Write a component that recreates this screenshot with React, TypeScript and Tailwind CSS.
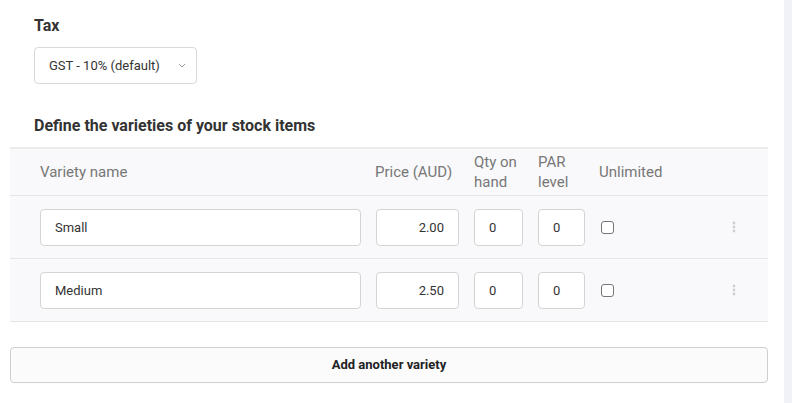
import React from 'react';

type Variety = { name: string; price: string; qty: string; par: string };

const varieties: Variety[] = [
  { name: 'Small', price: '2.00', qty: '0', par: '0' },
  { name: 'Medium', price: '2.50', qty: '0', par: '0' },
];

const inputCls =
  'h-[37px] rounded-[4px] border border-[#d4d4d4] bg-white px-[14px] text-[13px] text-[#333] outline-none';

function Kebab() {
  return (
    <svg width="4" height="12" viewBox="0 0 4 12" className="block">
      <circle cx="2" cy="2" r="1.4" fill="#cfcfcf" />
      <circle cx="2" cy="6" r="1.4" fill="#cfcfcf" />
      <circle cx="2" cy="10" r="1.4" fill="#cfcfcf" />
    </svg>
  );
}

function VarietyRow({ v }: { v: Variety }) {
  return (
    <div className="flex h-[63px] items-center border-b border-[#e6e6e6] pl-[30px] pr-[32px]">
      <input readOnly value={v.name} className={`${inputCls} w-[321px]`} />
      <input readOnly value={v.price} className={`${inputCls} ml-[15px] w-[83px] text-right`} />
      <input readOnly value={v.qty} className={`${inputCls} ml-[15px] w-[49px]`} />
      <input readOnly value={v.par} className={`${inputCls} ml-[15px] w-[47px]`} />
      <span className="ml-[16px] h-[13px] w-[13px] rounded-[3px] border border-[#767676] bg-white" />
      <div className="ml-auto">
        <Kebab />
      </div>
    </div>
  );
}

export default function App() {
  return (
    <div className="flex h-[403px] w-[792px] bg-white font-['Roboto',sans-serif]">
      <div className="w-[784px]">
        <div className="pl-[34px] pt-[14px]">
          <h3 className="text-[16px] font-bold leading-[24px] text-[#333]">Tax</h3>
          <div className="mt-[9px] flex h-[37px] w-[163px] items-center justify-between rounded-[4px] border border-[#d9d9d9] pl-[14px] pr-[10px] text-[13px] text-[#333]">
            <span>GST - 10% (default)</span>
            <svg width="8" height="5" viewBox="0 0 8 5" fill="none">
              <path d="M1 1l3 3 3-3" stroke="#9a9a9a" strokeWidth="1" />
            </svg>
          </div>
          <h3 className="mt-[30px] text-[16px] font-bold leading-[24px] text-[#333]">
            Define the varieties of your stock items
          </h3>
        </div>

        <div className="ml-[10px] mt-[9px] w-[758px] border-t-2 border-[#ebebeb] bg-[#f9f9fb]">
          <div className="flex h-[47px] items-center border-b border-[#e6e6e6] pl-[30px] text-[15px] leading-[20px] text-[#777]">
            <div className="w-[335px]">Variety name</div>
            <div className="w-[99px]">Price (AUD)</div>
            <div className="w-[64px]">
              Qty on
              <br />
              hand
            </div>
            <div className="w-[61px]">
              PAR
              <br />
              level
            </div>
            <div>Unlimited</div>
          </div>
          {varieties.map((v) => (
            <VarietyRow key={v.name} v={v} />
          ))}
        </div>

        <div className="ml-[10px] mt-[25px] flex h-[36px] w-[758px] items-center justify-center rounded-[4px] border border-[#cfcfcf] bg-[#fbfbfc] text-[13px] font-bold text-[#222]">
          Add another variety
        </div>
      </div>
      <div className="flex-1 bg-[#f1f2f8]" />
    </div>
  );
}
